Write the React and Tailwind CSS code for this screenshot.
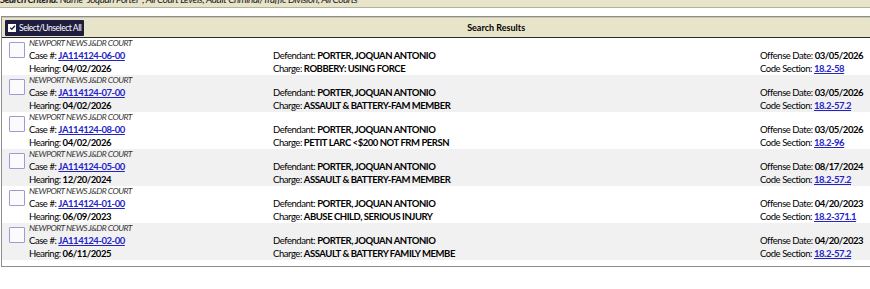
import React from "react";

const cases = [
  { num: "JA114124-06-00", hearing: "04/02/2026", charge: "ROBBERY: USING FORCE", offense: "03/05/2026", code: "18.2-58" },
  { num: "JA114124-07-00", hearing: "04/02/2026", charge: "ASSAULT & BATTERY-FAM MEMBER", offense: "03/05/2026", code: "18.2-57.2" },
  { num: "JA114124-08-00", hearing: "04/02/2026", charge: "PETIT LARC <$200 NOT FRM PERSN", offense: "03/05/2026", code: "18.2-96" },
  { num: "JA114124-05-00", hearing: "12/20/2024", charge: "ASSAULT & BATTERY-FAM MEMBER", offense: "08/17/2024", code: "18.2-57.2" },
  { num: "JA114124-01-00", hearing: "06/09/2023", charge: "ABUSE CHILD, SERIOUS INJURY", offense: "04/20/2023", code: "18.2-371.1" },
  { num: "JA114124-02-00", hearing: "06/11/2025", charge: "ASSAULT & BATTERY FAMILY MEMBE", offense: "04/20/2023", code: "18.2-57.2" },
];

function CaseRow({ c, idx }) {
  return (
    <div className={`flex h-[37px] ${idx % 2 === 1 ? "bg-[#f1f1f1]" : "bg-white"}`}>
      <div className="w-[27px] shrink-0 pl-[7px] pt-[4px]">
        <div className="w-[16px] h-[16px] border border-[#9c9cd2] rounded-[1px] bg-[#fbfbfe]" />
      </div>
      <div className="w-[244px] shrink-0">
        <div className="h-[11px] leading-[11px] text-[8.5px] tracking-[-0.5px] italic text-[#333]">NEWPORT NEWS J&amp;DR COURT</div>
        <div className="h-[13px] leading-[13px]">
          Case #: <a href="#" className="font-bold text-[#2323c8] underline">{c.num}</a>
        </div>
        <div className="h-[13px] leading-[13px]">
          Hearing: <span className="font-bold">{c.hearing}</span>
        </div>
      </div>
      <div className="w-[487px] shrink-0 pt-[11px]">
        <div className="h-[13px] leading-[13px]">
          Defendant: <span className="font-bold">PORTER, JOQUAN ANTONIO</span>
        </div>
        <div className="h-[13px] leading-[13px]">
          Charge: <span className="font-bold">{c.charge}</span>
        </div>
      </div>
      <div className="shrink-0 pt-[11px] whitespace-nowrap">
        <div className="h-[13px] leading-[13px]">
          Offense Date: <span className="font-bold">{c.offense}</span>
        </div>
        <div className="h-[13px] leading-[13px]">
          Code Section: <a href="#" className="font-bold text-[#2323c8] underline">{c.code}</a>
        </div>
      </div>
    </div>
  );
}

export default function App() {
  return (
    <div className="w-[870px] h-[289px] overflow-hidden bg-white text-[9.5px] tracking-[-0.45px] text-black font-['Lato',sans-serif]">
      <div className="h-[8px] overflow-hidden bg-[#e7e4c9] border-b border-[#b5b39c]">
        <div className="-mt-[7px] leading-[13px] text-[10px] italic whitespace-nowrap text-[#222]">
          <span className="font-bold">Search Criteria:</span> Name "Joquan Porter"; All Court Levels; Adult Criminal/Traffic Division; All Courts
        </div>
      </div>
      <div className="h-[8px]" />
      <div className="ml-[1px] w-[1000px] border border-[#8c8c8c] pb-[6px]">
        <div className="flex items-center h-[21px] bg-[#e7e4c9] border-b border-[#2b2b2b] border-t border-t-[#c9c7b0] px-[3px]">
          <button className="flex items-center gap-[3px] h-[16px] px-[3px] bg-[#1f1d3f] text-white text-[8.5px] leading-[16px] rounded-[1px]">
            <span className="w-[8px] h-[8px] bg-white flex items-center justify-center">
              <svg viewBox="0 0 10 10" className="w-[7px] h-[7px]">
                <path d="M1.5 5.2 L4 7.5 L8.5 2.5" stroke="#1f1d3f" strokeWidth="1.8" fill="none" />
              </svg>
            </span>
            Select/Unselect All
          </button>
          <div className="flex-1 text-center font-bold text-[9px] tracking-normal pr-[89px]">Search Results</div>
        </div>
        {cases.map((c, i) => (
          <CaseRow key={c.num} c={c} idx={i} />
        ))}
      </div>
    </div>
  );
}
